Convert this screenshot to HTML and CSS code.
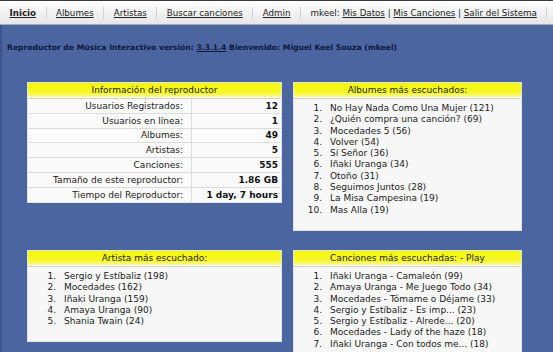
FILE: index.html
```html
<!DOCTYPE html>
<html lang="es">
<head>
    <meta charset="UTF-8">
    <title>Reproductor de Música Interactivo</title>
    <link rel="stylesheet" href="styles.css">
</head>
<body>

    <!-- Menu superior -->
    <div class="menu">
        <span class="menu-item"><a href="#" class="active">Inicio</a></span>
        <span class="menu-item"><a href="#">Albumes</a></span>
        <span class="menu-item"><a href="#">Artistas</a></span>
        <span class="menu-item"><a href="#">Buscar canciones</a></span>
        <span class="menu-item"><a href="#">Admin</a></span>
        <span class="menu-item">mkeel: <a href="#">Mis Datos</a> | <a href="#">Mis Canciones</a> | <a href="#">Salir del Sistema</a></span>
    </div>

    <div class="main">
        <p class="welcome">Reproductor de Música Interactivo versión: <a href="#">3.3.1.4</a> Bienvenido: Miguel Keel Souza (mkeel)</p>

        <div class="boxes">
            <div class="box">
                <div class="box-title">Información del reproductor</div>
                <table class="info">
                    <tr><td>Usuarios Registrados:</td><td>12</td></tr>
                    <tr><td>Usuarios en línea:</td><td>1</td></tr>
                    <tr><td>Albumes:</td><td>49</td></tr>
                    <tr><td>Artistas:</td><td>5</td></tr>
                    <tr><td>Canciones:</td><td>555</td></tr>
                    <tr><td>Tamaño de este reproductor:</td><td>1.86 GB</td></tr>
                    <tr><td>Tiempo del Reproductor:</td><td>1 day, 7 hours</td></tr>
                </table>
            </div>

            <div class="box">
                <div class="box-title">Albumes más escuchados:</div>
                <ol class="top-list">
                    <li>No Hay Nada Como Una Mujer (121)</li>
                    <li>¿Quién compra una canción? (69)</li>
                    <li>Mocedades 5 (56)</li>
                    <li>Volver (54)</li>
                    <li>Sí Señor (36)</li>
                    <li>Iñaki Uranga (34)</li>
                    <li>Otoño (31)</li>
                    <li>Seguimos Juntos (28)</li>
                    <li>La Misa Campesina (19)</li>
                    <li>Mas Alla (19)</li>
                </ol>
            </div>

            <div class="box">
                <div class="box-title">Artista más escuchado:</div>
                <ol class="top-list">
                    <li>Sergio y Estíbaliz (198)</li>
                    <li>Mocedades (162)</li>
                    <li>Iñaki Uranga (159)</li>
                    <li>Amaya Uranga (90)</li>
                    <li>Shania Twain (24)</li>
                </ol>
            </div>

            <div class="box">
                <div class="box-title">Canciones más escuchadas: - Play</div>
                <ol class="top-list">
                    <li>Iñaki Uranga - Camaleón (99)</li>
                    <li>Amaya Uranga - Me Juego Todo (34)</li>
                    <li>Mocedades - Tómame o Déjame (33)</li>
                    <li>Sergio y Estíbaliz - Es imp... (23)</li>
                    <li>Sergio y Estíbaliz - Alrede... (20)</li>
                    <li>Mocedades - Lady of the haze (18)</li>
                    <li>Iñaki Uranga - Con todos me... (18)</li>
                </ol>
            </div>
        </div>
    </div>

</body>
</html>
```

FILE: styles.css
```css
body {
    margin: 0;
    font-family: 'DejaVu Sans', Verdana, sans-serif;
    font-size: 9px;
    color: #222;
    background: #4a65a0;
    height: 352px;
    overflow: hidden;
}

a {
    color: #222;
}

.menu {
    display: flex;
    align-items: center;
    height: 23px;
    border-top: 1px solid #3a3a3a;
    border-bottom: 1px solid #a8a8a8;
    background: linear-gradient(#ffffff, #e6e6e6);
    font-size: 8.7px;
    white-space: nowrap;
    overflow: hidden;
}

.menu-item {
    flex-shrink: 0;
    padding: 0 9.5px;
    border-right: 1px solid #d2d2d2;
    line-height: 12px;
}

.menu-item .active {
    font-weight: bold;
}

.main {
    border-left: 2px solid #3c5489;
    height: 327px;
    padding-left: 5px;
}

.welcome {
    margin: 0;
    padding-top: 18px;
    font-size: 7.65px;
    font-weight: bold;
    color: #0d1a3c;
    line-height: 10px;
    white-space: nowrap;
}

.welcome a {
    color: #0d1a3c;
}

.boxes {
    display: grid;
    grid-template-columns: 255px 229px;
    column-gap: 11px;
    row-gap: 19px;
    align-items: start;
    margin: 29px 0 0 20px;
}

.box {
    background: #f7f7f7;
    border: 1px solid #e4e4e4;
}

.box-title {
    height: 14px;
    line-height: 14px;
    text-align: center;
    color: #222;
    background: linear-gradient(#f6f600, #f8f830 70%, #fafa9a);
    border-bottom: 1px solid #ffffff;
    box-shadow: 0 1px 0 #cfcfcf;
    margin-bottom: 1px;
}

.info {
    width: 100%;
    border-collapse: collapse;
    background: #fafafa;
}

.info td {
    height: 13.8px;
    padding: 0 8px 0 0;
    border-top: 1px solid #dcdcdc;
    text-align: right;
    white-space: nowrap;
}

.info tr:first-child td {
    border-top: none;
}

.info td:first-child {
    width: 155px;
    border-right: 1px solid #dcdcdc;
}

.info td:last-child {
    padding-right: 3px;
    font-weight: bold;
    color: #111;
}

.top-list {
    list-style: none;
    counter-reset: item;
    margin: 0;
    padding: 4px 0 14px 0;
    line-height: 11.3px;
}

.top-list li {
    counter-increment: item;
    white-space: nowrap;
}

.top-list li::before {
    content: counter(item) ".";
    display: inline-block;
    width: 36px;
    padding-right: 8px;
    box-sizing: border-box;
    text-align: right;
}
```
